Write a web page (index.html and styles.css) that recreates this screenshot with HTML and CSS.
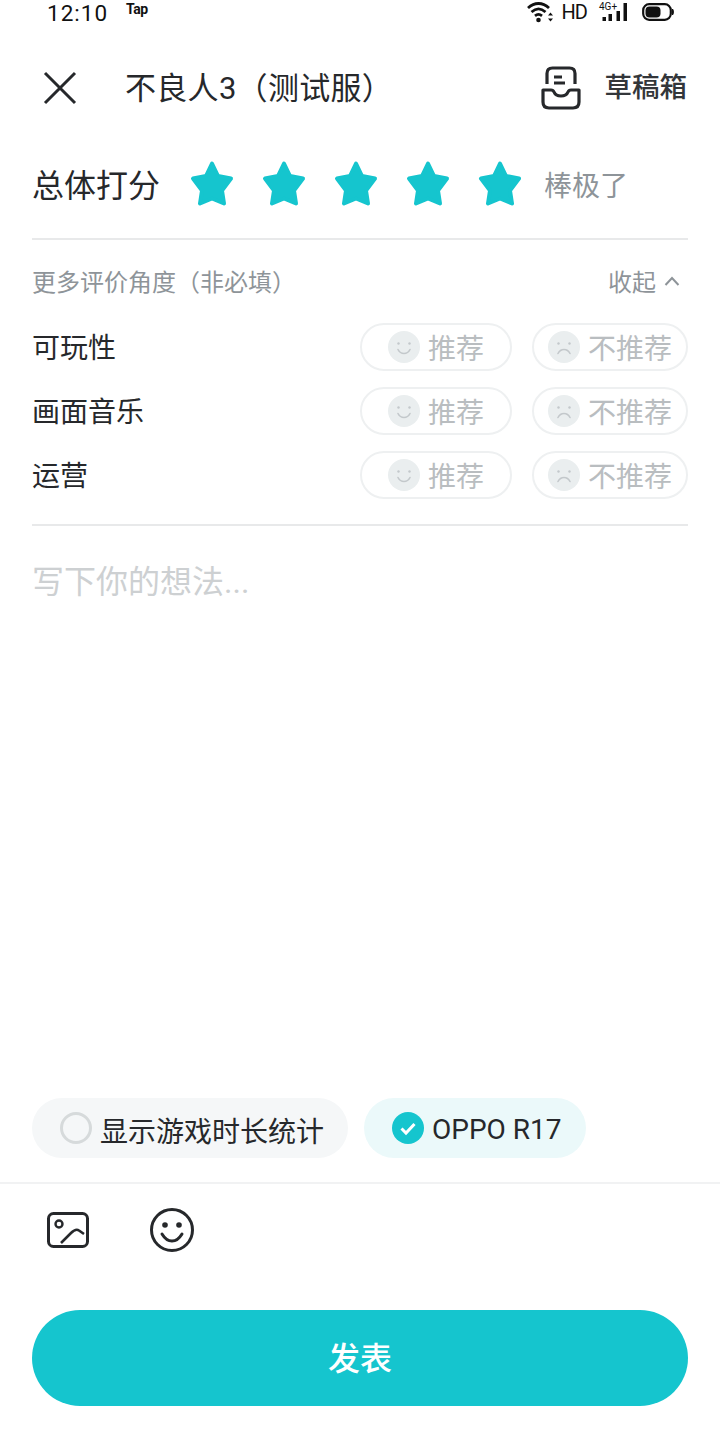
FILE: index.html
```html
<!DOCTYPE html>
<html lang="zh-CN">
<head>
    <meta charset="UTF-8">
    <meta name="viewport" content="width=device-width, initial-scale=1.0">
    <title>写评价</title>
    <link rel="stylesheet" href="styles.css">
</head>
<body>
    <svg class="svg-defs" width="0" height="0">
        <defs>
            <symbol id="star" viewBox="0 0 48 48">
                <polygon points="24,3.5 30,16 43,18.500 34,30.500 36,43.500 24,38.500 12,43.500 14,30.500 5,18.500 18,16" fill="#15c5ce" stroke="#15c5ce" stroke-width="4" stroke-linejoin="round"/>
            </symbol>
            <symbol id="happy" viewBox="0 0 32 32">
                <circle cx="16" cy="16" r="16" fill="#eaeeef"/>
                <circle cx="10.5" cy="12.5" r="1.2" fill="#c3c8cb"/>
                <circle cx="21.5" cy="12.5" r="1.2" fill="#c3c8cb"/>
                <path d="M10 18.5c1.500 3 3.500 4 6 4s4.500-1 6-4" fill="none" stroke="#c3c8cb" stroke-width="1.6" stroke-linecap="round"/>
            </symbol>
            <symbol id="sad" viewBox="0 0 32 32">
                <circle cx="16" cy="16" r="16" fill="#eaeeef"/>
                <circle cx="10.5" cy="12.5" r="1.2" fill="#c3c8cb"/>
                <circle cx="21.5" cy="12.5" r="1.2" fill="#c3c8cb"/>
                <path d="M10 22.5c1.500-3 3.500-4 6-4s4.500 1 6 4" fill="none" stroke="#c3c8cb" stroke-width="1.6" stroke-linecap="round"/>
            </symbol>
        </defs>
    </svg>

    <div class="page">
        <div class="status-bar">
            <div class="status-left">
                <span class="clock">12:10</span>
                <span class="tap">Tap</span>
            </div>
            <div class="status-right">
                <svg class="wifi-icon" width="26" height="22" viewBox="0 0 26 22">
                    <path d="M1 7c6.500-6 14.500-6 21 0M4.500 11c4.500-4 9.500-4 14 0M8 14.800c2.500-2 4.500-2 7 0" fill="none" stroke="#111" stroke-width="2.8"/>
                    <circle cx="11.5" cy="19" r="2.3" fill="#111"/>
                    <path d="M23.500 11.500l2.500 3h-5zM23.500 20.500l2.500-3h-5z" fill="#111"/>
                </svg>
                <span class="hd">HD</span>
                <svg class="signal-icon" width="30" height="22" viewBox="0 0 30 22">
                    <text x="1" y="9" class="net-label">4G+</text>
                    <rect x="4.5" y="16" width="3.5" height="4" fill="#111"/>
                    <rect x="10.5" y="13" width="3.5" height="7" fill="#111"/>
                    <rect x="18.5" y="10" width="3.5" height="10" fill="#111"/>
                    <rect x="25.5" y="2" width="3.5" height="18" fill="#111"/>
                </svg>
                <svg width="32" height="20" viewBox="0 0 32 20">
                    <rect x="1.2" y="2.2" width="27.6" height="15.6" rx="6" fill="none" stroke="#111" stroke-width="2.2"/>
                    <rect x="3.5" y="4.5" width="15" height="11" rx="4" fill="#111"/>
                    <path d="M30.500 7c1.200.8 1.200 5.200 0 6z" fill="#111" stroke="#111"/>
                </svg>
            </div>
        </div>

        <header class="top-bar">
            <svg class="close-icon" width="36" height="36" viewBox="0 0 36 36">
                <path d="M3 3l30 30M33 3L3 33" fill="none" stroke="#26282b" stroke-width="3"/>
            </svg>
            <h1 class="game-title">不良人3（测试服）</h1>
            <svg class="draft-icon" width="40" height="44" viewBox="0 0 40 44">
                <path d="M6 18V7.500C6 4 8 2 11.500 2h17C32 2 34 4 34 7.500V18" fill="none" stroke="#26282b" stroke-width="3.2"/>
                <path d="M13 11h8M13 17h11" fill="none" stroke="#26282b" stroke-width="3"/>
                <path d="M2 24h8c1.500 0 2.500.8 3 2 1 2.500 3.500 4 7 4s6-1.500 7-4c.5-1.200 1.500-2 3-2h8v12c0 3.800-2.200 6-6 6H8c-3.800 0-6-2.200-6-6z" fill="none" stroke="#26282b" stroke-width="3.2" stroke-linejoin="round"/>
            </svg>
            <span class="draft-label">草稿箱</span>
        </header>

        <section class="score-row">
            <span class="score-label">总体打分</span>
            <div class="stars">
                <svg width="48" height="48"><use href="#star"/></svg>
                <svg width="48" height="48"><use href="#star"/></svg>
                <svg width="48" height="48"><use href="#star"/></svg>
                <svg width="48" height="48"><use href="#star"/></svg>
                <svg width="48" height="48"><use href="#star"/></svg>
            </div>
            <span class="score-text">棒极了</span>
        </section>

        <section class="more">
            <div class="more-head">
                <span>更多评价角度（非必填）</span>
                <span class="collapse">收起
                    <svg width="16" height="10" viewBox="0 0 16 10">
                        <path d="M1.500 9L8 2l6.500 7" fill="none" stroke="#8e9499" stroke-width="2"/>
                    </svg>
                </span>
            </div>

            <div class="aspect">
                <span class="aspect-name">可玩性</span>
                <span class="pill pill-yes"><svg width="32" height="32"><use href="#happy"/></svg>推荐</span>
                <span class="pill pill-no"><svg width="32" height="32"><use href="#sad"/></svg>不推荐</span>
            </div>
            <div class="aspect">
                <span class="aspect-name">画面音乐</span>
                <span class="pill pill-yes"><svg width="32" height="32"><use href="#happy"/></svg>推荐</span>
                <span class="pill pill-no"><svg width="32" height="32"><use href="#sad"/></svg>不推荐</span>
            </div>
            <div class="aspect">
                <span class="aspect-name">运营</span>
                <span class="pill pill-yes"><svg width="32" height="32"><use href="#happy"/></svg>推荐</span>
                <span class="pill pill-no"><svg width="32" height="32"><use href="#sad"/></svg>不推荐</span>
            </div>
        </section>

        <div class="editor">写下你的想法...</div>

        <div class="chips">
            <span class="chip">
                <span class="radio"></span>
                <span class="chip-text">显示游戏时长统计</span>
            </span>
            <span class="chip chip-on">
                <svg width="32" height="32" viewBox="0 0 32 32">
                    <circle cx="16" cy="16" r="16" fill="#15c5ce"/>
                    <path d="M9.500 16.500l4.500 4.500 8.500-9" fill="none" stroke="#fff" stroke-width="3"/>
                </svg>
                <span class="chip-text">OPPO R17</span>
            </span>
        </div>

        <div class="tools">
            <svg class="image-icon" width="44" height="38" viewBox="0 0 44 38">
                <rect x="2.5" y="2.5" width="39" height="33" rx="5" fill="none" stroke="#26282b" stroke-width="3"/>
                <circle cx="13" cy="13" r="3.5" fill="none" stroke="#26282b" stroke-width="2.4"/>
                <path d="M15 32L25 22c3-3 6-4 8-2.500l5 3.500" fill="none" stroke="#26282b" stroke-width="2.6"/>
            </svg>
            <svg width="44" height="44" viewBox="0 0 44 44">
                <circle cx="22" cy="22" r="20.5" fill="none" stroke="#26282b" stroke-width="3"/>
                <circle cx="15" cy="17" r="2.8" fill="#26282b"/>
                <circle cx="29" cy="17" r="2.8" fill="#26282b"/>
                <path d="M12 26c3 5 6 7 10 7s7-2 10-7" fill="none" stroke="#26282b" stroke-width="3" stroke-linecap="round"/>
            </svg>
        </div>

        <button type="button" class="publish">发表</button>
    </div>
</body>
</html>
```

FILE: styles.css
```css
* {
    box-sizing: border-box;
}
html, body {
    margin: 0;
    background-color: #fff;
}
body {
    font-family: Roboto, "Noto Sans CJK SC", sans-serif;
    color: #26282b;
}
.svg-defs {
    display: block;
}
svg {
    display: block;
    flex-shrink: 0;
}
.page {
    height: 1436px;
    overflow: hidden;
    display: flex;
    flex-direction: column;
}

/* status bar */
.status-bar {
    height: 24px;
    padding: 0 46px 0 47px;
    display: flex;
    justify-content: space-between;
    align-items: flex-start;
    color: #111;
}
.status-left {
    display: flex;
    gap: 18px;
    align-items: flex-start;
}
.clock {
    font-size: 22.5px;
    letter-spacing: 1px;
}
.tap {
    font-size: 14px;
    font-weight: 700;
    letter-spacing: -0.5px;
    margin-top: 1px;
}
.status-right {
    display: flex;
    align-items: center;
}
.wifi-icon {
    margin-right: 9px;
}
.hd {
    font-size: 20px;
    letter-spacing: -1px;
    margin-right: 11px;
}
.signal-icon {
    margin-right: 14px;
}
.net-label {
    font-size: 10px;
    fill: #111;
}

/* header */
.top-bar {
    height: 84px;
    margin-top: 22px;
    padding: 0 33px 0 42px;
    display: flex;
    align-items: center;
}
.close-icon {
    margin-right: 47px;
}
.game-title {
    margin: 0;
    padding-top: 1px;
    flex: 1;
    font-size: 31px;
    line-height: 40px;
    font-weight: 400;
    letter-spacing: 0.3px;
}
.draft-icon {
    margin-right: 24px;
}
.draft-label {
    font-size: 27.5px;
    line-height: 40px;
    font-weight: 500;
    color: #33363a;
}

/* score */
.score-row {
    margin: 0 32px;
    height: 110px;
    border-bottom: 2px solid #e8e9ea;
    display: flex;
    align-items: center;
}
.score-label {
    padding-top: 3px;
    font-size: 32px;
    line-height: 44px;
    width: 156px;
}
.stars {
    display: flex;
    gap: 24px;
    margin-right: 20px;
}
.score-text {
    padding-top: 5px;
    font-size: 28px;
    line-height: 40px;
    color: #8e9499;
}

/* optional aspects */
.more {
    margin: 0 32px;
    height: 286px;
    border-bottom: 2px solid #e8e9ea;
}
.more-head {
    height: 83px;
    padding: 0 8px 2px 0;
    display: flex;
    justify-content: space-between;
    align-items: center;
    font-size: 24px;
    color: #8e9499;
}
.collapse {
    display: flex;
    align-items: center;
    gap: 8px;
}
.aspect {
    height: 48px;
    margin-bottom: 16px;
    display: flex;
    align-items: center;
}
.aspect-name {
    flex: 1;
    padding-top: 4px;
    font-size: 28px;
    line-height: 40px;
}
.pill {
    height: 48px;
    border: 2px solid #eef0f1;
    border-radius: 24px;
    display: flex;
    align-items: center;
    gap: 8px;
    font-size: 28px;
    color: #b9bdc0;
}
.pill-yes {
    width: 152px;
    padding-left: 26px;
}
.pill-no {
    width: 156px;
    margin-left: 20px;
    padding-left: 14px;
}

/* text box */
.editor {
    flex: 1;
    padding: 33px 32px 0;
    font-size: 32px;
    line-height: 46px;
    color: #cdd0d2;
}

/* chips and tools */
.chips {
    padding: 0 32px;
    display: flex;
    gap: 16px;
}
.chip {
    height: 60px;
    padding: 0 24px 0 28px;
    border-radius: 30px;
    background-color: #f5f7f8;
    display: flex;
    align-items: center;
    gap: 8px;
    font-size: 28px;
}
.chip-on {
    background-color: #ebf9fa;
}
.chip-text {
    padding-top: 3px;
}
.radio {
    width: 32px;
    height: 32px;
    border: 3px solid #d6dadb;
    border-radius: 50%;
}
.tools {
    height: 96px;
    margin-top: 24px;
    padding: 24px 0 0 46px;
    border-top: 2px solid #f1f2f3;
    display: flex;
    align-items: flex-start;
    gap: 60px;
}
.image-icon {
    margin-top: 3px;
}
.publish {
    display: block;
    flex-shrink: 0;
    height: 96px;
    margin: 32px 32px 30px;
    padding: 0 0 4px;
    border: none;
    border-radius: 48px;
    background-color: #15c5ce;
    color: white;
    font-family: inherit;
    font-size: 32px;
    font-weight: 500;
}
```
